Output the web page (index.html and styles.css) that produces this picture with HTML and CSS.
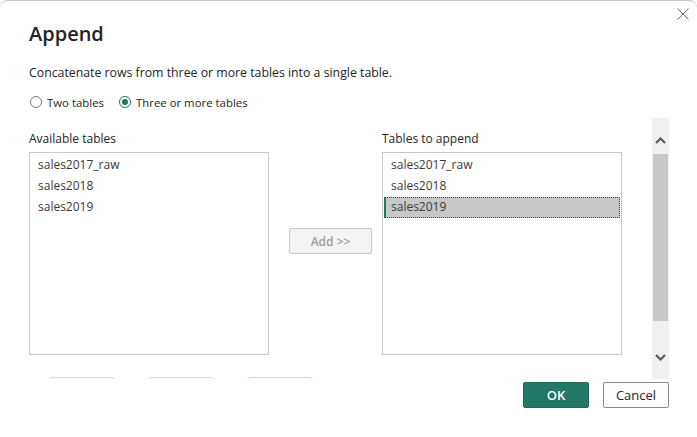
FILE: index.html
```html
<!DOCTYPE html>
<html>
<head>
<meta charset="utf-8">
<link rel="stylesheet" href="styles.css">
</head>
<body>
<div class="dialog">
  <button class="close" aria-label="Close">
    <svg width="12" height="12" viewBox="0 0 12 12"><path d="M0.5 0.5 L11.5 11.5 M11.5 0.5 L0.5 11.5" stroke="#6a6a6a" stroke-width="1" fill="none"/></svg>
  </button>
  <div class="head">
    <h1 class="title">Append</h1>
    <p class="desc">Concatenate rows from three or more tables into a single table.</p>
    <div class="radios">
      <label class="radio"><span class="circle"></span>Two tables</label>
      <label class="radio"><span class="circle on"></span>Three or more tables</label>
    </div>
  </div>
  <div class="scrollregion">
    <div class="content">
      <div class="cols">
        <div class="col">
          <div class="label">Available tables</div>
          <div class="listbox">
            <div class="item">sales2017_raw</div>
            <div class="item">sales2018</div>
            <div class="item">sales2019</div>
          </div>
        </div>
        <div class="mid">
          <button class="add">Add &gt;&gt;</button>
        </div>
        <div class="col">
          <div class="label">Tables to append</div>
          <div class="listbox">
            <div class="item">sales2017_raw</div>
            <div class="item">sales2018</div>
            <div class="item sel">sales2019</div>
          </div>
        </div>
      </div>
      <div class="ghosts">
        <span class="ghost"></span><span class="ghost"></span><span class="ghost"></span>
      </div>
    </div>
    <div class="vscroll">
      <div class="arrow up">
        <svg width="11" height="7" viewBox="0 0 11 7"><path d="M1 6 L5.5 1.5 L10 6" stroke="#5a5a5a" stroke-width="2.2" fill="none"/></svg>
      </div>
      <div class="thumb"></div>
      <div class="arrow down">
        <svg width="11" height="7" viewBox="0 0 11 7"><path d="M1 1 L5.5 5.5 L10 1" stroke="#5a5a5a" stroke-width="2.2" fill="none"/></svg>
      </div>
    </div>
  </div>
  <div class="footer">
    <button class="btn ok">OK</button>
    <button class="btn cancel">Cancel</button>
  </div>
</div>
</body>
</html>
```
FILE: styles.css
```css
* { box-sizing: border-box; }
html, body { margin: 0; padding: 0; background: #ffffff; }
body {
  font-family: "Open Sans", "Noto Sans", "Liberation Sans", sans-serif;
  color: #252423;
  width: 697px;
  height: 437px;
  overflow: hidden;
}
.dialog {
  position: relative;
  width: 697px;
  height: 437px;
  background: #fff;
  border-top: 1px solid #c6c6c6;
  border-radius: 8px 8px 0 0;
}
.close {
  position: absolute;
  top: 6px;
  right: 7px;
  width: 14px;
  height: 14px;
  padding: 1px;
  border: 0;
  background: transparent;
  display: flex;
}
.head { padding: 19px 0 0 29px; }
.title {
  margin: 0;
  font-size: 20px;
  line-height: 28px;
  font-weight: 600;
  color: #252423;
}
.desc {
  margin: 16px 0 0 0;
  font-size: 12.3px;
  line-height: 18px;
  color: #252423;
}
.radios {
  display: flex;
  gap: 14px;
  margin-top: 11px;
  height: 18px;
  align-items: center;
}
.radio {
  display: flex;
  align-items: center;
  font-size: 11.4px;
  color: #252423;
}
.circle {
  width: 12px;
  height: 12px;
  border: 1px solid #7a7a7a;
  border-radius: 50%;
  margin: 0 5px 0 1px;
  display: flex;
  align-items: center;
  justify-content: center;
}
.circle.on { border-color: #1f6f5d; }
.circle.on::after {
  content: "";
  width: 6px;
  height: 6px;
  border-radius: 50%;
  background: #1f7a64;
}
.scrollregion {
  position: absolute;
  top: 117px;
  left: 0;
  right: 0;
  height: 261px;
  display: flex;
}
.content {
  width: 652px;
  padding: 12px 0 0 29px;
  overflow: hidden;
}
.cols { display: flex; }
.col { width: 240px; display: flex; flex-direction: column; }
.label {
  font-size: 12px;
  line-height: 18px;
  height: 22px;
  color: #252423;
}
.listbox {
  width: 240px;
  height: 203px;
  border: 1px solid #c8c8c8;
  padding: 2px 1px 0 1px;
}
.item {
  height: 21px;
  line-height: 20px;
  padding-left: 7px;
  font-size: 12px;
  color: #3b3a39;
}
.item.sel {
  background: #c8c8c8;
  border: 1px dotted #444;
  border-left: 2px solid #1f7a64;
  padding-left: 5px;
  line-height: 18px;
}
.mid { width: 113px; padding: 98px 0 0 20px; }
.add {
  width: 83px;
  height: 26px;
  background: #f3f3f3;
  border: 1px solid #c8c8c8;
  border-radius: 2px;
  color: #a0a0a0;
  font-family: inherit;
  font-size: 12px;
  font-weight: 600;
  padding: 0;
}
.ghosts {
  display: flex;
  gap: 33px;
  margin: 22px 0 0 20px;
  height: 4px;
  overflow: hidden;
}
.ghost {
  width: 66px;
  height: 20px;
  border: 1px solid #d8d8d8;
  border-radius: 3px;
}
.vscroll {
  width: 17px;
  background: #f0f0f0;
  display: flex;
  flex-direction: column;
}
.arrow {
  display: flex;
  justify-content: center;
}
.arrow.up { height: 36px; padding-top: 19px; }
.arrow.down { flex: 1; align-items: flex-end; padding-bottom: 18px; }
.thumb {
  height: 167px;
  margin: 0 1px;
  background: #c8c8c8;
}
.footer {
  position: absolute;
  top: 381px;
  right: 28px;
  display: flex;
  gap: 14px;
}
.btn {
  width: 66px;
  height: 26px;
  border-radius: 2px;
  font-family: inherit;
  font-size: 13px;
  font-weight: 600;
  padding: 0;
}
.ok {
  background: #217867;
  border: 1px solid #1c6b5b;
  color: #ffffff;
}
.cancel {
  background: #ffffff;
  border: 1px solid #8a8a8a;
  color: #252423;
  font-weight: 500;
}
```
